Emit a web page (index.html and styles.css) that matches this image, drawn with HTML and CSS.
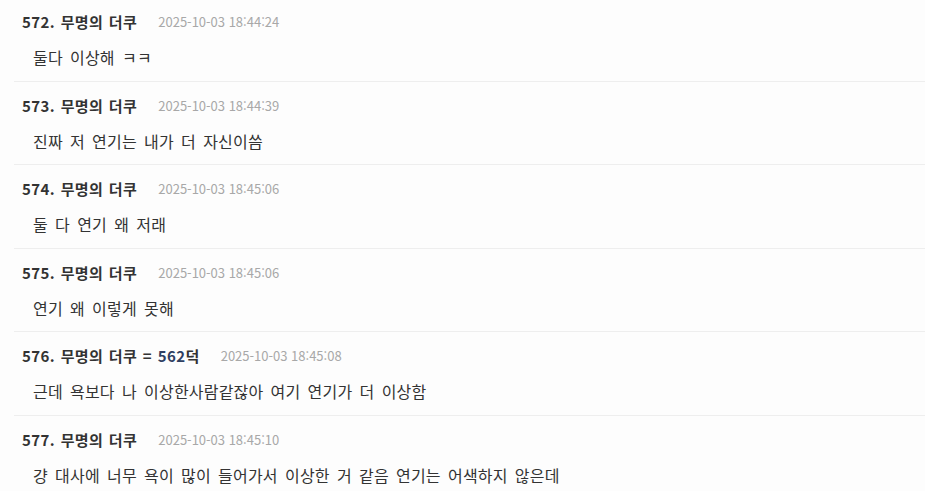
FILE: index.html
```html
<!DOCTYPE html>
<html lang="ko">
<head>
<meta charset="utf-8">
<link rel="stylesheet" href="styles.css">
</head>
<body>
<ul class="comments">
  <li class="comment">
    <div class="meta"><span class="author">572. 무명의 더쿠</span><span class="date">2025-10-03 18:44:24</span></div>
    <p class="body">둘다 이상해 ㅋㅋ</p>
  </li>
  <li class="comment">
    <div class="meta"><span class="author">573. 무명의 더쿠</span><span class="date">2025-10-03 18:44:39</span></div>
    <p class="body">진짜 저 연기는 내가 더 자신이씀</p>
  </li>
  <li class="comment">
    <div class="meta"><span class="author">574. 무명의 더쿠</span><span class="date">2025-10-03 18:45:06</span></div>
    <p class="body">둘 다 연기 왜 저래</p>
  </li>
  <li class="comment">
    <div class="meta"><span class="author">575. 무명의 더쿠</span><span class="date">2025-10-03 18:45:06</span></div>
    <p class="body">연기 왜 이렇게 못해</p>
  </li>
  <li class="comment">
    <div class="meta"><span class="author">576. 무명의 더쿠 = <span class="ref">562</span>덕</span><span class="date">2025-10-03 18:45:08</span></div>
    <p class="body">근데 욕보다 나 이상한사람같잖아 여기 연기가 더 이상함</p>
  </li>
  <li class="comment">
    <div class="meta"><span class="author">577. 무명의 더쿠</span><span class="date">2025-10-03 18:45:10</span></div>
    <p class="body">걍 대사에 너무 욕이 많이 들어가서 이상한 거 같음 연기는 어색하지 않은데</p>
  </li>
</ul>
</body>
</html>
```
FILE: styles.css
```css
html, body {
  margin: 0;
  padding: 0;
  background: #fdfdfd;
  overflow: hidden;
}
body {
  font-family: "Noto Sans CJK KR", "Noto Sans", sans-serif;
  color: #333;
}
.comments {
  list-style: none;
  margin: 0 0 0 14px;
  padding: 0;
}
.comment {
  border-top: 1px solid #eeeeee;
  padding: 14px 0 12.5px 8px;
}
.comment:first-child {
  border-top: none;
  padding-top: 12px;
}
.meta {
  display: flex;
  align-items: center;
  gap: 21px;
  height: 20px;
}
.author {
  font-size: 15px;
  font-weight: 700;
  letter-spacing: 0.4px;
  word-spacing: 1px;
  color: #333;
  line-height: 20px;
}
.ref {
  color: #2f3f62;
}
.date {
  font-size: 13px;
  color: #a8a8a8;
  line-height: 20px;
}
.body {
  margin: 14px 0 0 11px;
  font-size: 16px;
  line-height: 22px;
  letter-spacing: 0.2px;
  word-spacing: 2.5px;
  color: #333;
}
```
